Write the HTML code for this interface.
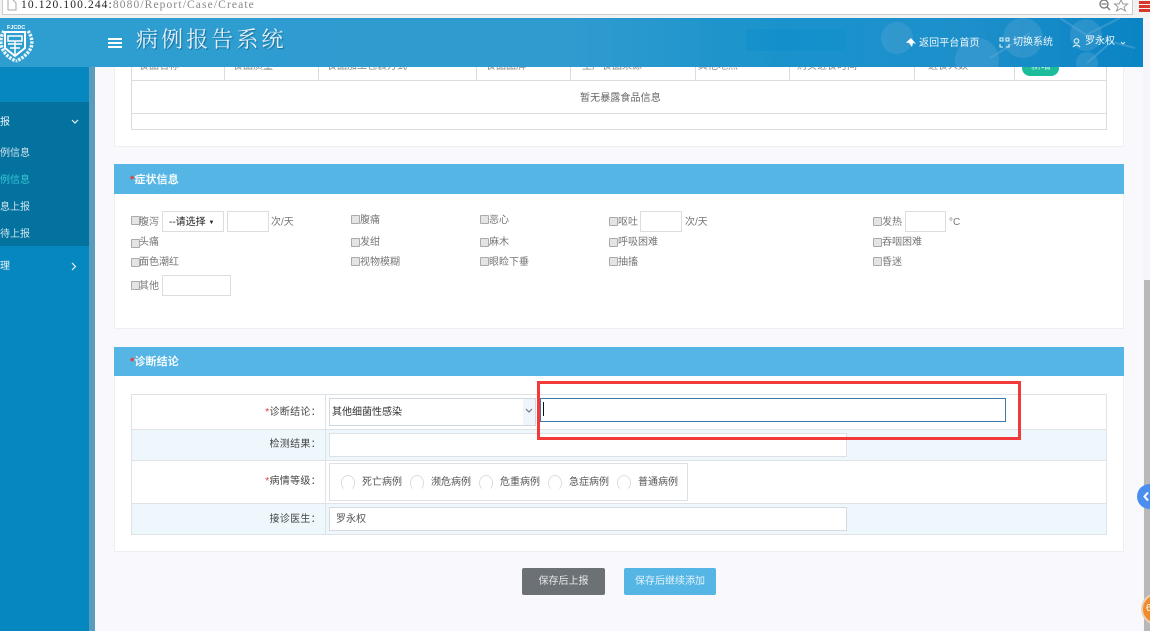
<!DOCTYPE html>
<html lang="zh">
<head>
<meta charset="utf-8">
<style>
html,body{margin:0;padding:0;width:1150px;height:631px;overflow:hidden;background:#f8f8fd}
body{position:relative;font-family:"Liberation Sans","Noto Sans CJK SC",sans-serif;font-size:10px;color:#777}
#w{position:absolute;left:0;top:0;width:1150px;height:631px;filter:blur(.35px)}
.a{position:absolute;box-sizing:border-box}
.t{position:absolute;white-space:nowrap;line-height:14px}
.cb{position:absolute;width:7px;height:7px;background:#e4e4e4;border:1px solid #aaa;border-radius:1px;box-sizing:content-box}
.in{position:absolute;box-sizing:border-box;background:#fff;border:1px solid #ddd}
.r{position:absolute;width:14px;height:16px;background:#fff;border:1px solid #ddd;border-bottom-color:#fff;border-radius:50%;box-sizing:border-box}
.lb{position:absolute;left:137px;width:184px;text-align:right;white-space:nowrap;color:#444;font-size:10px;line-height:14px;letter-spacing:.3px}
.red{color:#e33}
.hl{position:absolute;background:#dcdcdc}
</style>
</head>
<body>
<div id="w">
<!-- browser bar -->
<div class="a" style="left:0;top:0;width:1150px;height:18px;background:#f2f2f2"></div>
<div class="a" style="left:2px;top:-2px;width:1131px;height:17px;background:#fff;border:1px solid #ccc"></div>
<svg class="a" style="left:7px;top:0" width="10" height="12"><path d="M1 0V10H9V3L6 0" fill="#fff" stroke="#aaa"/></svg>
<div class="t" style="left:21px;top:-2px;font:11.5px/14px 'Liberation Serif',serif;color:#222;letter-spacing:1.12px">10.120.100.244:<span style="color:#888">8080/Report/Case/Create</span></div>
<svg class="a" style="left:1097px;top:0" width="42" height="12"><circle cx="7" cy="4" r="4" fill="none" stroke="#777" stroke-width="1.3"/><path d="M4.500 4H9.500M10 7L13 10" stroke="#777" stroke-width="1.300"/><path d="M24 0L26 4 30.500 4 27 7 28.500 11 24 8.500 19.500 11 21 7 17.500 4 22 4Z" fill="#fff" stroke="#999"/></svg>
<div class="a" style="left:1139px;top:1px;width:11px;height:3px;background:#d9372c"></div>
<div class="a" style="left:1139px;top:5px;width:11px;height:3px;background:#d9372c"></div>
<div class="a" style="left:1139px;top:9px;width:11px;height:3px;background:#d9372c"></div>

<!-- sidebar -->
<div class="a" style="left:0;top:67px;width:89px;height:564px;background:#0787bf"></div>
<div class="a" style="left:89px;top:67px;width:6px;height:564px;background:#5a9cbc"></div>
<div class="a" style="left:0;top:102px;width:89px;height:144px;background:#04729f"></div>
<div class="t" style="left:0;top:116px;color:#e8f4f8;font-size:10px">报</div>
<svg class="a" style="left:71px;top:119px" width="8" height="6"><path d="M1 1L4 4 7 1" fill="none" stroke="#e8f4f8" stroke-width="1.200"/></svg>
<div class="t" style="left:0;top:147px;color:#cde4ee">例信息</div>
<div class="t" style="left:0;top:174px;color:#36c6d3">例信息</div>
<div class="t" style="left:0;top:201px;color:#cde4ee">息上报</div>
<div class="t" style="left:0;top:228px;color:#cde4ee">待上报</div>
<div class="t" style="left:0;top:260px;color:#e8f4f8">理</div>
<svg class="a" style="left:71px;top:262px" width="6" height="9"><path d="M1 1L4.500 4.500 1 8" fill="none" stroke="#e8f4f8" stroke-width="1.200"/></svg>

<!-- scrollbar -->
<div class="a" style="left:1143px;top:18px;width:7px;height:613px;background:#f6f6fa"></div>
<div class="a" style="left:1144px;top:280px;width:6px;height:351px;background:#b8b8b8"></div>

<!-- panel 1 -->
<div class="a" style="left:114px;top:67px;width:1010px;height:80px;background:#fff;border:1px solid #eeeef3;border-top:0"></div>
<div class="a" style="left:131px;top:60px;width:976px;height:70px;background:#fff;border:1px solid #dcdcdc"></div>
<div class="hl" style="left:131px;top:80px;width:976px;height:1px"></div>
<div class="hl" style="left:131px;top:113px;width:976px;height:1px"></div>
<div class="hl" style="left:224px;top:60px;width:1px;height:20px"></div>
<div class="hl" style="left:318px;top:60px;width:1px;height:20px"></div>
<div class="hl" style="left:476px;top:60px;width:1px;height:20px"></div>
<div class="hl" style="left:570px;top:60px;width:1px;height:20px"></div>
<div class="hl" style="left:695px;top:60px;width:1px;height:20px"></div>
<div class="hl" style="left:789px;top:60px;width:1px;height:20px"></div>
<div class="hl" style="left:914px;top:60px;width:1px;height:20px"></div>
<div class="hl" style="left:1014px;top:60px;width:1px;height:20px"></div>
<div class="t" style="left:139px;top:60px;color:#888">食品名称</div>
<div class="t" style="left:233px;top:60px;color:#888">食品质量</div>
<div class="t" style="left:327px;top:60px;color:#888">食品加工包装方式</div>
<div class="t" style="left:486px;top:60px;color:#888">食品品牌</div>
<div class="t" style="left:582px;top:60px;color:#888">生产食品来源</div>
<div class="t" style="left:698px;top:60px;color:#888">其他地点</div>
<div class="t" style="left:797px;top:60px;color:#888">购买进食时间</div>
<div class="t" style="left:928px;top:60px;color:#888">进食人数</div>
<div class="a" style="left:1022px;top:60px;width:37px;height:16px;background:#1bbc9b;border-radius:8px"></div>
<div class="t" style="left:1031px;top:60px;color:#d8f5ee">新增</div>
<div class="t" style="left:580px;top:92px;color:#666;letter-spacing:.1px">暂无暴露食品信息</div>

<!-- header -->
<div class="a" style="left:0;top:18px;width:1143px;height:49px;background:linear-gradient(90deg,#2e9ed0 0,#2f9bcf 50%,#1a93cc 68%,#1d8fca 85%,#0a84c4 100%)"></div>
<svg class="a" style="left:0;top:18px" width="1143" height="49">
<rect x="700" y="0" width="45" height="49" fill="#1e93cb" opacity=".5"/>
<rect x="746" y="11" width="100" height="22" fill="#0a8cc8" opacity=".35"/>
<g fill="#5aa8d6" opacity=".35"><circle cx="897" cy="20" r="16"/><circle cx="977" cy="42" r="22"/><circle cx="1023" cy="20" r="20"/><circle cx="1086" cy="17" r="16"/><circle cx="1087" cy="45" r="11"/></g>
<path d="M990 40L1030 15M1086 17L1060 0M1086 17L1120 0M1086 17L1135 30M1087 45L1110 25" stroke="#5aa8d6" stroke-width="2" opacity=".5"/>
</svg>
<!-- logo -->
<svg class="a" style="left:-2px;top:22px" width="38" height="42">
<text x="9" y="7" font-family="Liberation Sans" font-size="5.500" font-weight="bold" fill="#fff">FJCDC</text>
<path d="M6 9A19 19 0 0 0 4 26Q8 35 18 39M30 9A19 19 0 0 1 33 26Q28 35 18 39" fill="none" stroke="#e8f3fa" stroke-width="3.500" stroke-dasharray="2.500 1.200"/>
<path d="M7 10H27V26L17 34 7 26Z" fill="none" stroke="#fff" stroke-width="2"/>
<path d="M10 14H24V19H10ZM10 22H24M17 19V33M12 26H22" fill="none" stroke="#fff" stroke-width="1.500"/>
</svg>
<div class="a" style="left:108px;top:38px;width:14px;height:2px;background:#fff"></div>
<div class="a" style="left:108px;top:42px;width:14px;height:2px;background:#fff"></div>
<div class="a" style="left:108px;top:46px;width:14px;height:2px;background:#fff"></div>
<div class="t" style="left:136px;top:26px;font-size:22px;line-height:26px;letter-spacing:3.100px;color:#e6f2f9;text-shadow:1px 1px 1px #1a6e9c;font-family:'Noto Serif CJK SC','Noto Sans CJK SC',serif">病例报告系统</div>
<svg class="a" style="left:906px;top:38px" width="11" height="10"><path d="M5 0L0 4.500 3 5 6 9 7 5 10 6Z" fill="#fff"/></svg>
<div class="t" style="left:919px;top:37px;color:#eef7fb;letter-spacing:.1px">返回平台首页</div>
<svg class="a" style="left:999px;top:37px" width="11" height="11"><path d="M1 1H4V4H1ZM7 1H10V4H7ZM1 7V10H4M7 10H10V7" fill="none" stroke="#eef7fb"/></svg>
<div class="t" style="left:1013px;top:36px;color:#eef7fb">切换系统</div>
<svg class="a" style="left:1072px;top:38px" width="9" height="10"><circle cx="4.500" cy="3" r="2.300" fill="none" stroke="#eef7fb"/><path d="M1 9Q4.500 5 8 9" fill="none" stroke="#eef7fb"/></svg>
<div class="t" style="left:1085px;top:35px;color:#eef7fb">罗永权</div>
<svg class="a" style="left:1120px;top:41px" width="6" height="4"><path d="M1 1L3 3 5 1" fill="none" stroke="#cfe6f2"/></svg>

<!-- panel 2 -->
<div class="a" style="left:114px;top:164px;width:1010px;height:165px;background:#fff;border:1px solid #eeeef3"></div>
<div class="a" style="left:114px;top:164px;width:1010px;height:30px;background:#55b6e6"></div>
<div class="t" style="left:130px;top:173px;font-size:11px;font-weight:bold;color:#f4fafd;letter-spacing:.1px"><span class="red">*</span>症状信息</div>

<i class="cb" style="left:131px;top:216px"></i><div class="t" style="left:139px;top:216px">腹泻</div>
<div class="in" style="left:162px;top:211px;width:62px;height:21px;color:#222;font-size:10px;line-height:21px;padding-left:6px">--请选择 <span style="font-size:6px;vertical-align:1px">▼</span></div>
<div class="in" style="left:227px;top:211px;width:42px;height:21px"></div>
<div class="t" style="left:271px;top:216px">次/天</div>
<i class="cb" style="left:131px;top:239px"></i><div class="t" style="left:139px;top:236px">头痛</div>
<i class="cb" style="left:131px;top:258px"></i><div class="t" style="left:139px;top:256px">面色潮红</div>
<i class="cb" style="left:131px;top:281px"></i><div class="t" style="left:139px;top:280px">其他</div>
<div class="in" style="left:162px;top:275px;width:69px;height:21px"></div>

<i class="cb" style="left:351px;top:215px"></i><div class="t" style="left:360px;top:214px">腹痛</div>
<i class="cb" style="left:351px;top:238px"></i><div class="t" style="left:360px;top:236px">发绀</div>
<i class="cb" style="left:351px;top:257px"></i><div class="t" style="left:360px;top:256px">视物模糊</div>

<i class="cb" style="left:480px;top:215px"></i><div class="t" style="left:489px;top:214px">恶心</div>
<i class="cb" style="left:480px;top:238px"></i><div class="t" style="left:489px;top:236px">麻木</div>
<i class="cb" style="left:480px;top:257px"></i><div class="t" style="left:489px;top:256px">眼睑下垂</div>

<i class="cb" style="left:609px;top:217px"></i><div class="t" style="left:618px;top:216px">呕吐</div>
<div class="in" style="left:640px;top:211px;width:42px;height:21px"></div>
<div class="t" style="left:685px;top:216px">次/天</div>
<i class="cb" style="left:609px;top:238px"></i><div class="t" style="left:618px;top:236px">呼吸困难</div>
<i class="cb" style="left:609px;top:257px"></i><div class="t" style="left:618px;top:256px">抽搐</div>

<i class="cb" style="left:873px;top:217px"></i><div class="t" style="left:882px;top:216px">发热</div>
<div class="in" style="left:905px;top:211px;width:41px;height:21px"></div>
<div class="t" style="left:949px;top:216px">°C</div>
<i class="cb" style="left:873px;top:238px"></i><div class="t" style="left:882px;top:236px">吞咽困难</div>
<i class="cb" style="left:873px;top:257px"></i><div class="t" style="left:882px;top:256px">昏迷</div>

<!-- panel 3 -->
<div class="a" style="left:114px;top:347px;width:1010px;height:205px;background:#fff;border:1px solid #eeeef3"></div>
<div class="a" style="left:114px;top:347px;width:1010px;height:29px;background:#55b6e6"></div>
<div class="t" style="left:130px;top:355px;font-size:11px;font-weight:bold;color:#f4fafd;letter-spacing:.1px"><span class="red">*</span>诊断结论</div>

<div class="a" style="left:131px;top:394px;width:976px;height:141px;background:#fff;border:1px solid #dfe3e8"></div>
<div class="a" style="left:132px;top:430px;width:974px;height:30px;background:#edf7fc"></div>
<div class="a" style="left:132px;top:504px;width:974px;height:30px;background:#edf7fc"></div>
<div class="hl" style="left:131px;top:429px;width:976px;height:1px;background:#dfe3e8"></div>
<div class="hl" style="left:131px;top:460px;width:976px;height:1px;background:#dfe3e8"></div>
<div class="hl" style="left:131px;top:503px;width:976px;height:1px;background:#dfe3e8"></div>
<div class="hl" style="left:325px;top:394px;width:1px;height:141px;background:#dfe3e8"></div>

<div class="lb" style="top:406px"><span class="red">*</span>诊断结论：</div>
<div class="lb" style="top:438px">检测结果：</div>
<div class="lb" style="top:475px"><span class="red">*</span>病情等级：</div>
<div class="lb" style="top:513px">接诊医生：</div>

<div class="in" style="left:329px;top:398px;width:207px;height:28px;border-color:#cfd8e0"></div>
<div class="a" style="left:523px;top:399px;width:12px;height:26px;background:#eef6fb"></div>
<svg class="a" style="left:525px;top:408px" width="8" height="6"><path d="M1 1L4 4 7 1" fill="none" stroke="#778" stroke-width="1.200"/></svg>
<div class="t" style="left:332px;top:406px;color:#333">其他细菌性感染</div>

<div class="in" style="left:540px;top:398px;width:466px;height:24px;border:1px solid #3f77a8"></div>
<div class="a" style="left:543px;top:402px;width:1px;height:14px;background:#111"></div>

<div class="in" style="left:329px;top:433px;width:518px;height:24px;border-color:#dde1e6"></div>
<div class="in" style="left:329px;top:463px;width:359px;height:38px;border-color:#dde1e6"></div>
<i class="r" style="left:341px;top:475px"></i><div class="t" style="left:362px;top:476px;color:#555">死亡病例</div>
<i class="r" style="left:410px;top:475px"></i><div class="t" style="left:431px;top:476px;color:#555">濒危病例</div>
<i class="r" style="left:479px;top:475px"></i><div class="t" style="left:500px;top:476px;color:#555">危重病例</div>
<i class="r" style="left:548px;top:475px"></i><div class="t" style="left:569px;top:476px;color:#555">急症病例</div>
<i class="r" style="left:617px;top:475px"></i><div class="t" style="left:638px;top:476px;color:#555">普通病例</div>

<div class="in" style="left:329px;top:507px;width:518px;height:24px;border-color:#d5dae0"></div>
<div class="t" style="left:336px;top:513px;color:#555">罗永权</div>

<!-- red box -->
<div class="a" style="left:537px;top:381px;width:484px;height:59px;border:3px solid #f23a3a"></div>

<!-- buttons -->
<div class="a" style="left:522px;top:568px;width:83px;height:27px;background:#6c7176;border-radius:2px;color:#e6e8ea;text-align:center;line-height:27px">保存后上报</div>
<div class="a" style="left:624px;top:568px;width:92px;height:27px;background:#55b6e6;border-radius:2px;color:#e4f4fb;text-align:center;line-height:27px">保存后继续添加</div>

<!-- floating -->
<div class="a" style="left:1137px;top:484px;width:25px;height:25px;border-radius:50%;background:#4a8ff0"></div>
<svg class="a" style="left:1142px;top:491px" width="8" height="11"><path d="M6 1.500L2.500 5.500 6 9.500" fill="none" stroke="#fff" stroke-width="2"/></svg>
<div class="a" style="left:1141px;top:593px;width:32px;height:32px;border-radius:50%;background:#f08a2c;border:2px solid #e8d3b8"></div>
<div class="t" style="left:1146px;top:602px;color:#fff">6</div>
</div>
</body>
</html>
